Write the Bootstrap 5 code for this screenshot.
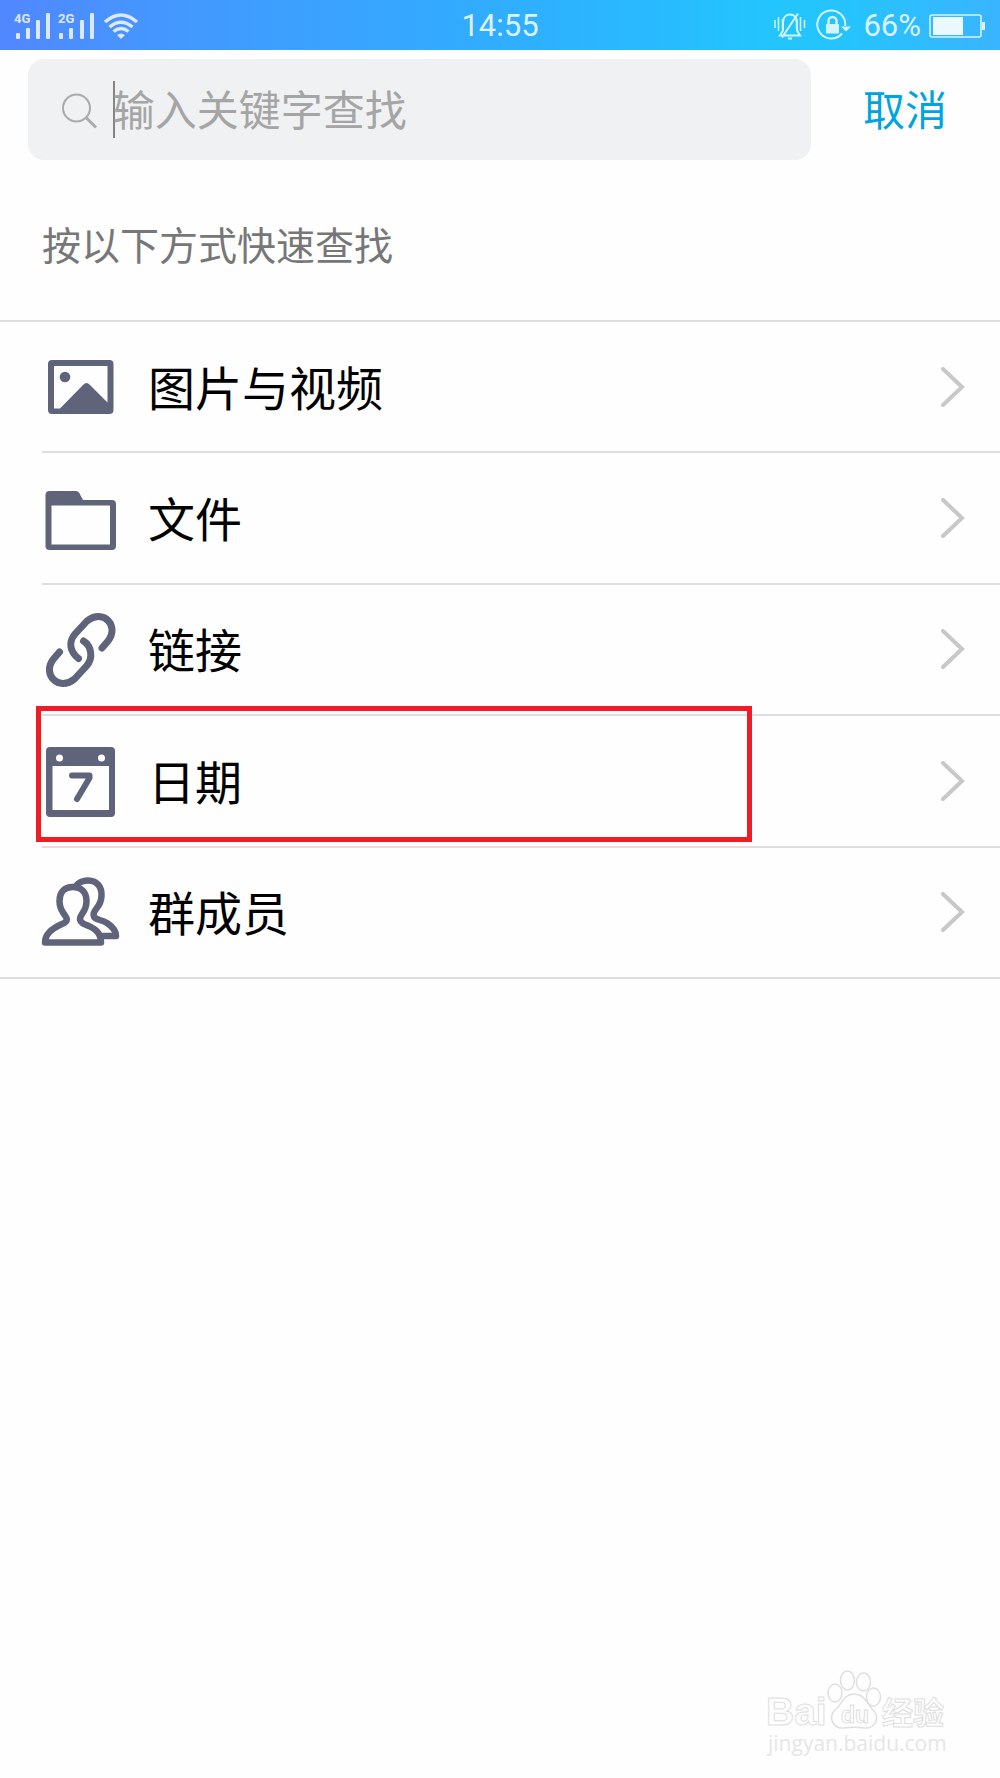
<!DOCTYPE html>
<html lang="zh-CN">
<head>
<meta charset="utf-8">
<meta name="viewport" content="width=device-width, initial-scale=1">
<title>查找</title>
<link href="https://cdn.jsdelivr.net/npm/bootstrap@5.3.0/dist/css/bootstrap.min.css" rel="stylesheet">
<style>
body{font-family:"Noto Sans CJK SC",sans-serif;background:#fefefe;color:#000}
svg{display:block;flex:none}
.status-bar{display:grid;grid-template-columns:1fr auto 1fr;height:50px;padding:0 14px;
  background:linear-gradient(90deg,#5187ff 0%,#4596fe 15%,#30adff 50%,#23c5fd 78%,#25c3fd 85%,#3ab4ff 100%);
  font-family:Roboto,sans-serif;font-size:31px;line-height:52px;color:#dcf1ff}
.sig-label{font:700 13px Roboto,sans-serif;fill:#dce8ff}
.search-row{padding:9px 45px 0 28px;gap:44px}
.search-box{height:101px;background:#f0f1f3;border-radius:16px;padding:0 24px 0 33px}
.caret{width:2px;height:57px;background:#858585;margin:0 -2px 0 14px}
.search-box .form-control{font-size:42px;line-height:60px;color:#333;height:70px;margin-bottom:4px}
.search-box .form-control::placeholder{color:#a5a5a5;opacity:1}
.cancel-btn{font-size:42px;line-height:60px;color:#00a5e0;padding:0 8px 4px}
.tip-line{font-size:39px;line-height:60px;font-weight:400;color:#777;margin:53px 42px 47px}
.type-list{display:grid;grid-auto-rows:1fr;min-height:659px;border-top:2px solid #dedede}
.type-item{position:relative}
.type-link{height:100%;margin-left:42px;border-bottom:2px solid #dedede;color:#000;font-size:47px;line-height:70px;padding-right:33px;gap:28px}
.type-link svg:first-child{margin-left:-2px}
.type-link span{padding-bottom:2px}
.type-item:last-child .type-link{margin-left:0;padding-left:42px}
.marked::after{content:"";position:absolute;left:36px;top:-10px;bottom:6px;width:716px;border:5px solid #ee1c25;pointer-events:none}
.brand-mark{position:absolute;right:48px;top:1668px;width:190px;height:90px}
.brand-mark text{fill:#fefefe;stroke:#dfdfdf;stroke-width:1}
.brand-mark .site-url{stroke:none;fill:#e6e6e6}
</style>
</head>
<body>
<header class="status-bar">
  <div class="d-flex align-items-center">
    <svg width="126" height="50" viewBox="14 0 126 50" fill="#dce8ff" aria-label="信号">
      <text class="sig-label" x="14" y="22">4G</text>
      <rect x="16" y="32" width="4" height="6" rx="1"/><rect x="26" y="27" width="4" height="11" rx="1"/><rect x="36" y="19" width="4" height="19" rx="1"/><rect x="46" y="12" width="4" height="26" rx="1"/>
      <text class="sig-label" x="58" y="22">2G</text>
      <rect x="59" y="32" width="4" height="6" rx="1"/><rect x="69" y="27" width="4" height="11" rx="1"/><rect x="80" y="19" width="4" height="19" rx="1"/><rect x="90" y="12" width="4" height="26" rx="1"/>
      <g fill="none" stroke="#dce8ff" stroke-width="3.4"><path d="M105 21q16-14 32 0"/><path d="M109.500 26q11.500-9.500 23 0"/><path d="M113.500 30.500q7.500-6 15 0"/></g>
      <path d="M117 34q4-3 8 0l-4 4z"/>
    </svg>
  </div>
  <div>14:55</div>
  <div class="d-flex align-items-center justify-content-end">
    <svg width="78" height="50" viewBox="774 0 78 50" fill="none" stroke="#d3f3ff" stroke-width="2" aria-hidden="true">
      <path d="M776 19v8M779.500 16v14M783.500 18v10M797.500 18v10M801.500 16v14M805.500 19v8" stroke-width="1.500"/>
      <path d="M781 34.500h20l-3-5v-8c0-5-3-8-7-8s-7 3-7 8v8zM783 36.500L799 12.500M789 37.500h4"/>
      <path d="M843 32.500a14 14 0 1 1 3.200-7.500"/><path d="M842 25.500h10l-5 5z" fill="#d3f3ff" stroke="none"/>
      <rect x="827" y="23" width="13" height="9.500" rx="1" fill="#d3f3ff" stroke="none"/><path d="M829.500 23v-3a4 4 0 0 1 8 0v3" stroke-width="2.400"/>
    </svg>
    <span class="ms-2 me-2 ps-1">66%</span>
    <svg width="57" height="50" viewBox="929 0 57 50" aria-hidden="true"><rect x="930" y="14" width="51" height="22" rx="2" fill="none" stroke="#d8f2ff" stroke-width="1.600"/><rect x="933" y="16" width="30" height="18" fill="#eaf8ff"/><rect x="982" y="21" width="3" height="8" fill="#d8f2ff"/></svg>
  </div>
</header>
<main>
  <form class="search-row d-flex align-items-center">
    <div class="search-box d-flex align-items-center flex-grow-1">
      <svg width="38" height="38" viewBox="0 0 38 38" fill="none" stroke="#aaa" stroke-width="2" aria-hidden="true"><circle cx="15.500" cy="17" r="13.500"/><path d="M25 26.500l10 10" stroke-width="3"/></svg>
      <span class="caret"></span>
      <input class="form-control border-0 bg-transparent shadow-none p-0" type="text" placeholder="输入关键字查找" aria-label="输入关键字查找">
    </div>
    <button type="button" class="btn border-0 cancel-btn flex-shrink-0">取消</button>
  </form>
  <h1 class="tip-line">按以下方式快速查找</h1>
  <ul class="type-list list-unstyled mb-0">
    <li class="type-item"><a href="#" class="type-link d-flex align-items-center text-decoration-none">
      <svg width="80" height="80" fill="#5f647b"><path fill-rule="evenodd" d="M12 13h57.500a4 4 0 0 1 4 4v46a4 4 0 0 1-4 4H12a4 4 0 0 1-4-4V17a4 4 0 0 1 4-4zM14 19v42.500h6L43 38q3.500-4 7 0l17.500 17.500V19z"/><circle cx="25" cy="30" r="5.300"/></svg>
      <span class="flex-grow-1">图片与视频</span>
      <svg width="26" height="40" fill="none" stroke="#c8c8c8" stroke-width="4" stroke-linecap="round"><path d="M2 2l19 18L2 38"/></svg></a></li>
    <li class="type-item"><a href="#" class="type-link d-flex align-items-center text-decoration-none">
      <svg width="80" height="80" fill="#5f647b"><path fill-rule="evenodd" d="M9.500 13H36q2 0 3 1.500l4 7.500H72a4 4 0 0 1 4 4v42a4 4 0 0 1-4 4H9.500a4 4 0 0 1-4-4V17a4 4 0 0 1 4-4zM11.500 27.500V66.500H70V27.500z"/></svg>
      <span class="flex-grow-1">文件</span>
      <svg width="26" height="40" fill="none" stroke="#c8c8c8" stroke-width="4" stroke-linecap="round"><path d="M2 2l19 18L2 38"/></svg></a></li>
    <li class="type-item"><a href="#" class="type-link d-flex align-items-center text-decoration-none">
      <svg width="80" height="80" fill="none" stroke="#5f647b" stroke-width="7" stroke-linecap="round"><path d="M62 39L68 32C80 17 63-1 47 12L35 25C28 33 30 43 38.500 49.500"/><path d="M19.500 43L13.500 50C1.500 65 18.500 83 34.500 70L46.500 57C53.500 49 51.500 37 43.500 32"/></svg>
      <span class="flex-grow-1">链接</span>
      <svg width="26" height="40" fill="none" stroke="#c8c8c8" stroke-width="4" stroke-linecap="round"><path d="M2 2l19 18L2 38"/></svg></a></li>
    <li class="type-item marked"><a href="#" class="type-link d-flex align-items-center text-decoration-none">
      <svg width="80" height="80" fill="#5f647b"><path fill-rule="evenodd" d="M10 6h61a4 4 0 0 1 4 4v62a4 4 0 0 1-4 4H10a4 4 0 0 1-4-4V10a4 4 0 0 1 4-4zM12.500 25v44H69V25z"/><circle cx="19.500" cy="17" r="3.500" fill="#fff"/><circle cx="61.500" cy="17" r="3.500" fill="#fff"/><path d="M32 34.500H49.500V37L37 58" fill="none" stroke="#5f647b" stroke-width="6" stroke-linecap="round" stroke-linejoin="round"/></svg>
      <span class="flex-grow-1">日期</span>
      <svg width="26" height="40" fill="none" stroke="#c8c8c8" stroke-width="4" stroke-linecap="round"><path d="M2 2l19 18L2 38"/></svg></a></li>
    <li class="type-item"><a href="#" class="type-link d-flex align-items-center text-decoration-none">
      <svg width="80" height="80" fill="none" stroke="#5f647b" stroke-width="6.500" stroke-linejoin="round"><path d="M36 14C39 10 43 8.500 48 8.500C58 8.500 62 16 61.500 24C61 36 53 37 53.500 43C54 48 60 47 67 51C73 55 76 59 76 64H61"/><path d="M5 70.500C5 60 15 55 22 52C30 49 26 45 24 42C21 38 19.500 34 19.500 29C19.500 21 24 15 32.500 15C42 15 46.500 21 46.500 29C46.500 34 45 38 42 42C40 45 38 49 44 52C52 55 61 59 61 70.500Z"/></svg>
      <span class="flex-grow-1">群成员</span>
      <svg width="26" height="40" fill="none" stroke="#c8c8c8" stroke-width="4" stroke-linecap="round"><path d="M2 2l19 18L2 38"/></svg></a></li>
  </ul>
</main>
<svg class="brand-mark" viewBox="762 1668 190 90" aria-label="百度经验">
  <text x="766" y="1725" font-family="Liberation Sans" font-weight="700" font-size="39">Bai</text>
  <g fill="#fefefe" stroke="#dfdfdf" stroke-width="1.500"><ellipse cx="835" cy="1693" rx="7" ry="9"/><ellipse cx="847.500" cy="1680.500" rx="7" ry="9.500"/><ellipse cx="863.500" cy="1682" rx="7" ry="9"/><ellipse cx="873.500" cy="1697" rx="7" ry="9"/><path d="M854 1694c-10 0-12 10-18 15c-9 8-3 20 8 19c7-1 13-1 20 0c12 1 16-11 9-18c-6-6-8-16-19-16z"/></g>
  <text x="841" y="1723" font-family="Liberation Sans" font-weight="700" font-size="23">du</text>
  <text x="882" y="1724" font-family="Noto Sans CJK SC" font-weight="700" font-size="31">经验</text>
  <text class="site-url" x="768" y="1751" font-family="Open Sans" font-size="21">jingyan.baidu.com</text>
</svg>
<script src="https://cdn.jsdelivr.net/npm/bootstrap@5.3.0/dist/js/bootstrap.bundle.min.js"></script>
</body>
</html>
